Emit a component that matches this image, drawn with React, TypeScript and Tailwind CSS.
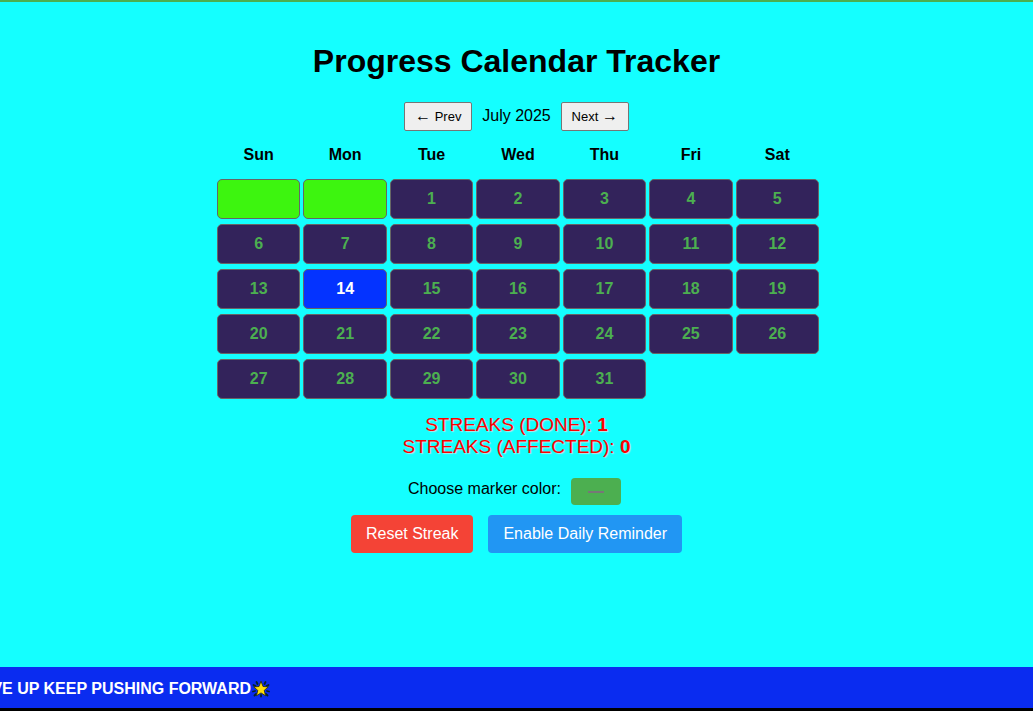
import React from "react";

const WEEKDAYS = ["Sun", "Mon", "Tue", "Wed", "Thu", "Fri", "Sat"];
const DAYS = Array.from({ length: 31 }, (_, i) => i + 1);
const TODAY = 14;

function GlowingStar() {
  return (
    <svg viewBox="0 0 20 20" className="size-5 shrink-0" aria-hidden="true">
      <g stroke="#06222c" strokeWidth="1.800" strokeLinecap="round">
        <path d="M6.500 5 5.500 3M13.500 5 14.500 3M4.500 7 2.500 6M15.500 7 17.500 6M4 12 2 12.500M16 12 18 12.500M5 15 3.500 16.500M15 15 16.500 16.500M10 16V17.500" />
      </g>
      <path
        d="M10 2.200 12 7.500 17.300 7.900 13.200 11.400 14.600 16.800 10 13.900 5.400 16.800 6.800 11.400 2.700 7.900 8 7.500Z"
        fill="#ffde0a"
        stroke="#222808"
        strokeWidth="0.800"
        strokeLinejoin="round"
      />
    </svg>
  );
}

function NavButton({ children }: { children: React.ReactNode }) {
  return (
    <button
      type="button"
      className="h-[29px] w-[68px] rounded-[2px] border border-[#767676] bg-[#efefef] text-[13px] leading-5 whitespace-nowrap"
    >
      {children}
    </button>
  );
}

function DayCell({ day }: { day: number }) {
  const look = day === TODAY ? "bg-[#0433ff] text-white" : "bg-[#33235b] text-[#4caf50]";
  return (
    <button type="button" className={`h-10 rounded-[5px] border border-[#666] font-bold ${look}`}>
      {day}
    </button>
  );
}

export default function App() {
  return (
    <div className="flex min-h-screen flex-col border-t-2 border-[#4caf50] bg-[#14ffff] font-['Liberation_Sans',Arial,sans-serif] text-base text-black">
      <main className="flex flex-col items-center pt-10">
        <h1 className="text-[32px] leading-[38px] font-bold">Progress Calendar Tracker</h1>

        <div className="mt-[22px] flex items-center gap-[10px]">
          <NavButton>
            <span className="text-base leading-5">←</span> Prev
          </NavButton>
          <span className="pb-0.5 leading-5">July 2025</span>
          <NavButton>
            Next <span className="text-base leading-5">→</span>
          </NavButton>
        </div>

        <div className="mt-[10px] grid w-[605px] max-w-full grid-cols-7 gap-x-[3px] gap-y-[5px] pl-[3px] text-center">
          {WEEKDAYS.map((name) => (
            <div key={name} className="h-[33px] pt-[5px] leading-[18px] font-bold">
              {name}
            </div>
          ))}
          <div className="h-10 rounded-[5px] border border-[#666] bg-[#3df50f]" />
          <div className="h-10 rounded-[5px] border border-[#666] bg-[#3df50f]" />
          {DAYS.map((day) => (
            <DayCell key={day} day={day} />
          ))}
        </div>

        <div className="mt-[15px] text-center text-[19px] leading-[22px] text-[#ff0000] [text-shadow:1px_1px_1px_#b9e8e8]">
          <p>
            STREAKS (DONE): <strong>1</strong>
          </p>
          <p>
            STREAKS (AFFECTED): <strong>0</strong>
          </p>
        </div>

        <div className="mt-5 flex gap-[10px] pr-1">
          <label htmlFor="marker" className="leading-[22px]">
            Choose marker color:
          </label>
          <input
            id="marker"
            type="color"
            defaultValue="#808080"
            className="h-[27px] w-[50px] rounded-[4px] border-0 bg-[#4caf50] px-[15px] pt-[9px] pb-2"
          />
        </div>

        <div className="mt-[10px] flex gap-[15px]">
          <button type="button" className="h-[38px] rounded-[4px] bg-[#f44336] px-[15px] text-white">
            Reset Streak
          </button>
          <button type="button" className="h-[38px] rounded-[4px] bg-[#2196f3] px-[15px] text-white">
            Enable Daily Reminder
          </button>
        </div>
      </main>

      <footer className="mt-auto border-b-[3px] border-black bg-[#0a2cf0] pt-[11px] pb-[9px]">
        <div className="flex h-[21px] w-[271px] items-center justify-end overflow-hidden font-bold whitespace-nowrap text-white">
          <span>GIVE UP KEEP PUSHING FORWARD</span>
          <GlowingStar />
        </div>
      </footer>
    </div>
  );
}
